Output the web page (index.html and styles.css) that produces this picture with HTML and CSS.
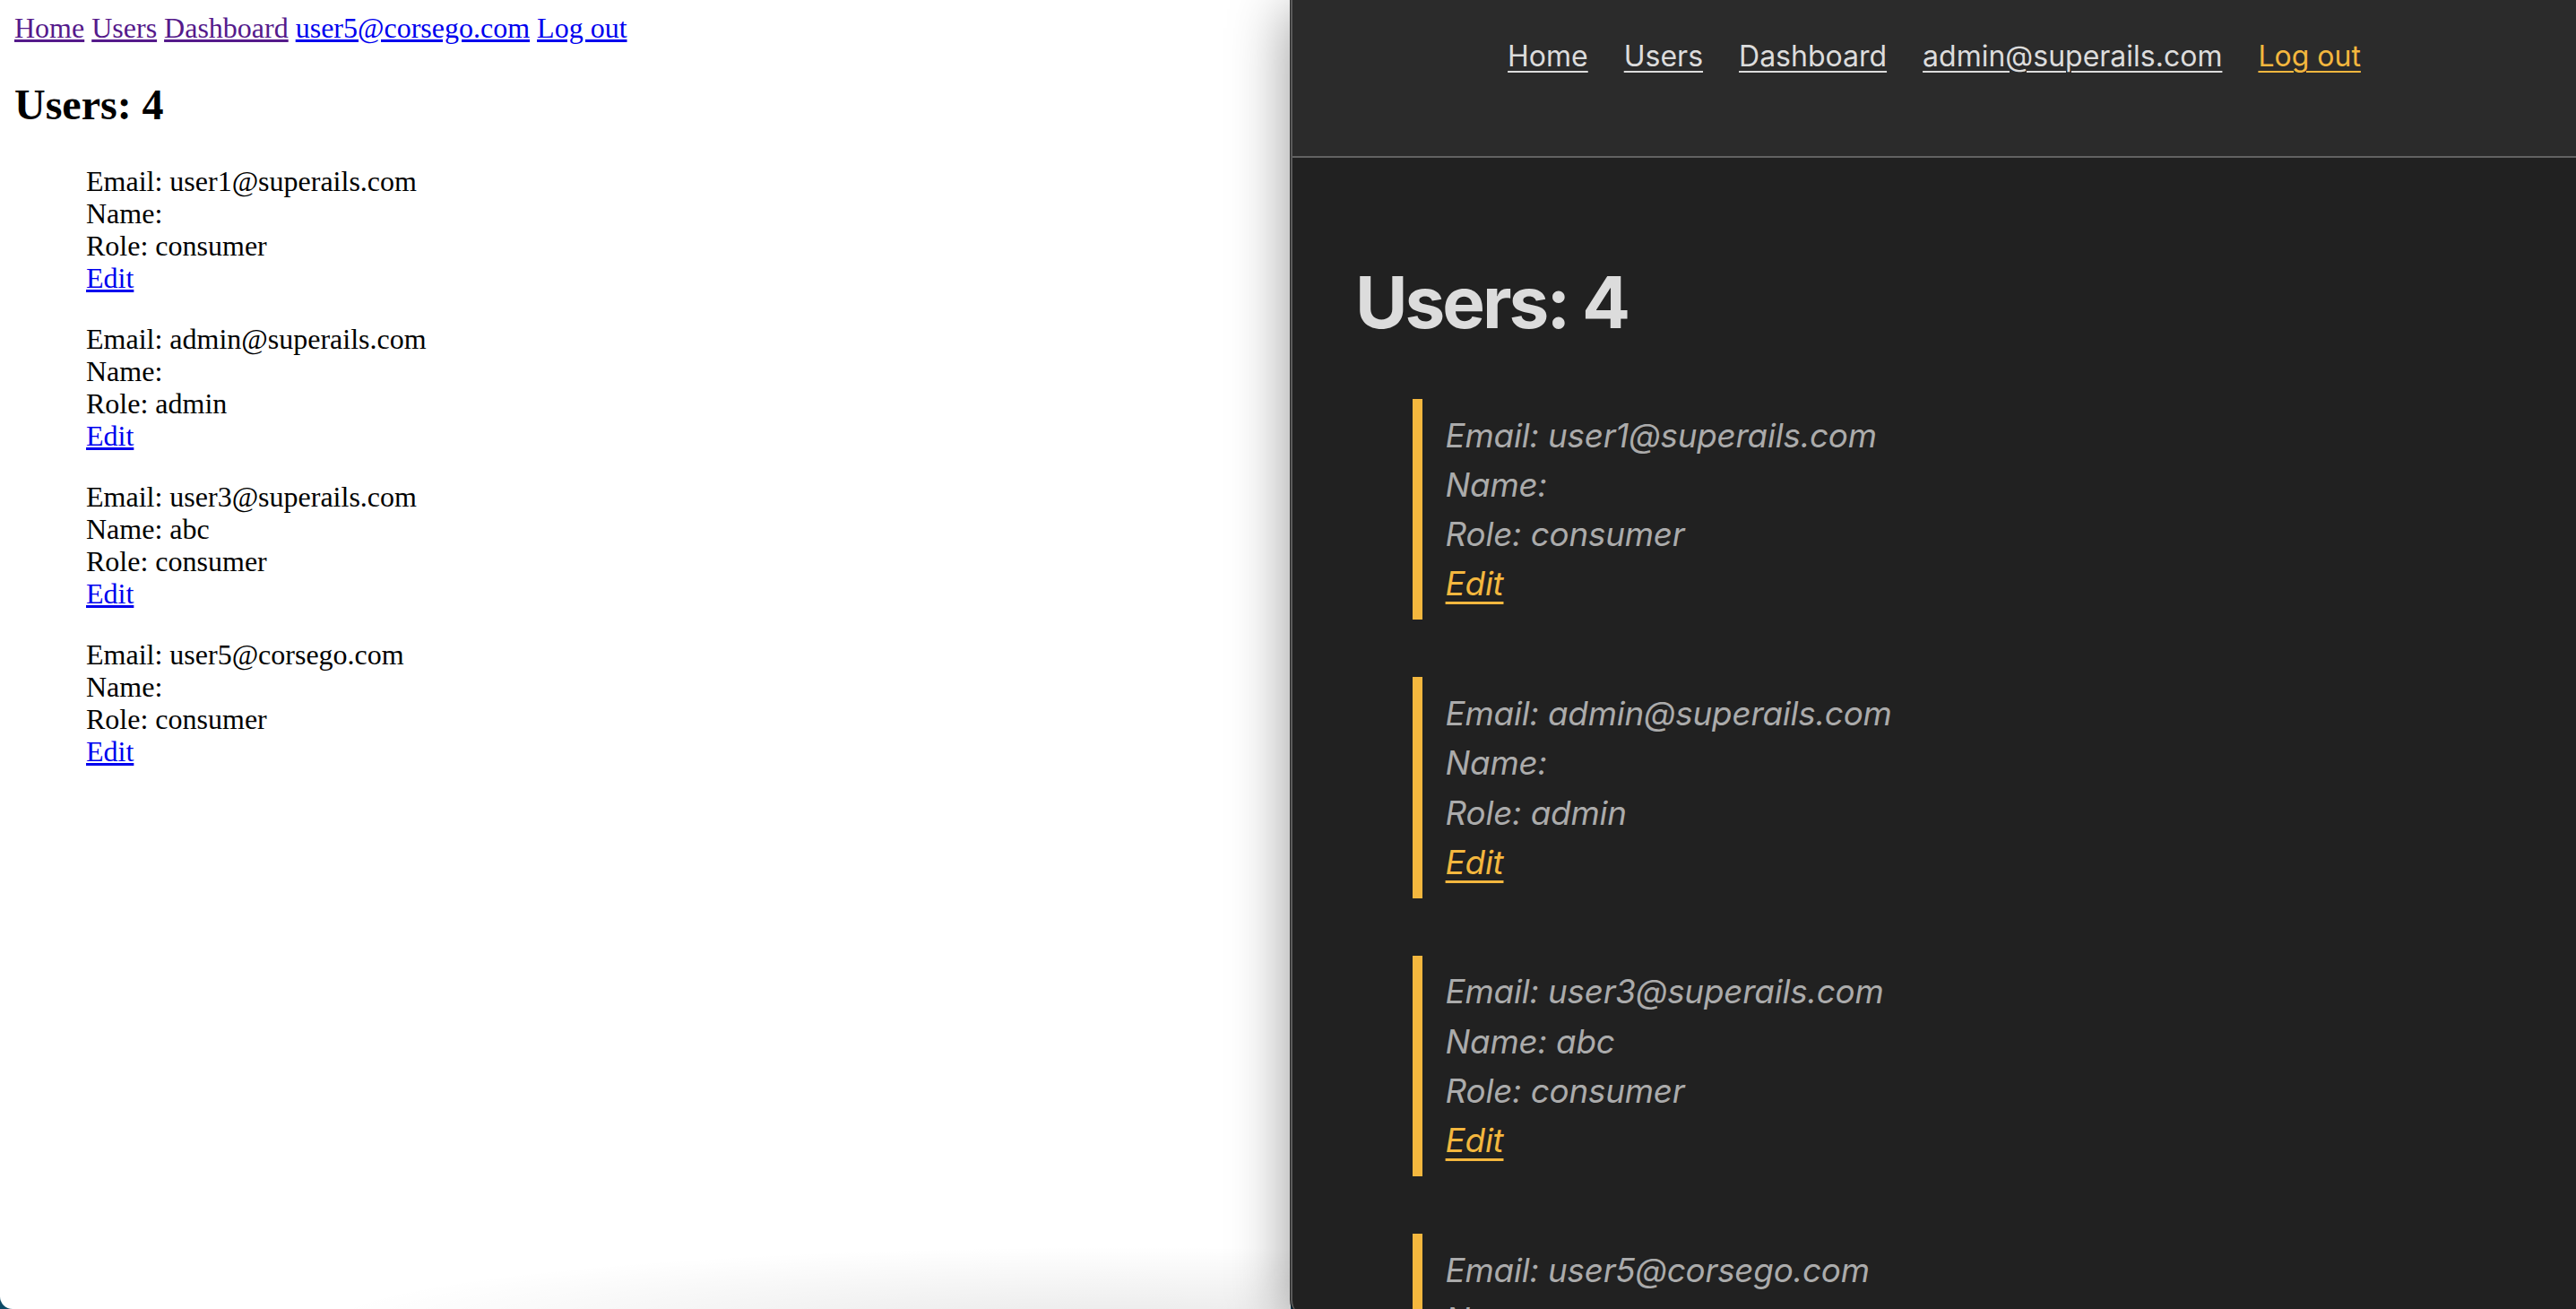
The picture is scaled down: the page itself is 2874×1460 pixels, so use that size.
FILE: index.html
```html
<!DOCTYPE html>
<html lang="en">
<head>
<meta charset="utf-8">
<title>Users</title>
<link rel="stylesheet" href="styles.css">
</head>
<body>
<div class="desktop">
  <div class="win win-light">
    <nav class="l-nav">
      <a class="l-link is-visited" href="#">Home</a>
      <a class="l-link is-visited" href="#">Users</a>
      <a class="l-link is-visited" href="#">Dashboard</a>
      <a class="l-link" href="#">user5@corsego.com</a>
      <a class="l-link" href="#">Log out</a>
    </nav>
    <section class="l-main">
      <h1 class="l-title">Users: 4</h1>
      <blockquote class="l-user">
        <div>Email: user1@superails.com</div>
        <div>Name: </div>
        <div>Role: consumer</div>
        <a class="l-link" href="#">Edit</a>
      </blockquote>
      <blockquote class="l-user">
        <div>Email: admin@superails.com</div>
        <div>Name: </div>
        <div>Role: admin</div>
        <a class="l-link" href="#">Edit</a>
      </blockquote>
      <blockquote class="l-user">
        <div>Email: user3@superails.com</div>
        <div>Name: abc</div>
        <div>Role: consumer</div>
        <a class="l-link" href="#">Edit</a>
      </blockquote>
      <blockquote class="l-user">
        <div>Email: user5@corsego.com</div>
        <div>Name: </div>
        <div>Role: consumer</div>
        <a class="l-link" href="#">Edit</a>
      </blockquote>
    </section>
  </div>

  <div class="win win-dark">
    <header class="d-header">
      <nav class="d-nav">
        <a class="d-link" href="#">Home</a>
        <a class="d-link" href="#">Users</a>
        <a class="d-link" href="#">Dashboard</a>
        <a class="d-link" href="#">admin@superails.com</a>
        <a class="d-link d-accent" href="#">Log out</a>
      </nav>
    </header>
    <main class="d-main">
      <h1 class="d-title">Users: 4</h1>
      <blockquote class="d-user">
        <div>Email: user1@superails.com</div>
        <div>Name: </div>
        <div>Role: consumer</div>
        <a class="d-edit" href="#">Edit</a>
      </blockquote>
      <blockquote class="d-user">
        <div>Email: admin@superails.com</div>
        <div>Name: </div>
        <div>Role: admin</div>
        <a class="d-edit" href="#">Edit</a>
      </blockquote>
      <blockquote class="d-user">
        <div>Email: user3@superails.com</div>
        <div>Name: abc</div>
        <div>Role: consumer</div>
        <a class="d-edit" href="#">Edit</a>
      </blockquote>
      <blockquote class="d-user">
        <div>Email: user5@corsego.com</div>
        <div>Name: </div>
        <div>Role: consumer</div>
        <a class="d-edit" href="#">Edit</a>
      </blockquote>
    </main>
  </div>
</div>
</body>
</html>
```

FILE: styles.css
```css
html, body {
  margin: 0;
  padding: 0;
  height: 100%;
}

body {
  background: #0d4a66;
  overflow: hidden;
}

.desktop {
  display: flex;
  height: 1460px;
  overflow: hidden;
}

/* ---------- light (unstyled) window ---------- */
.win-light {
  flex: 0 0 1440px;
  box-sizing: border-box;
  height: 1460px;
  padding: 13px 16px 16px;
  background:
    radial-gradient(ellipse 900px 90px at 1250px 1480px, rgba(0, 0, 0, 0.09), rgba(0, 0, 0, 0) 100%),
    #ffffff;
  border-bottom-left-radius: 14px;
  font-family: "Liberation Serif", "Times New Roman", serif;
  font-size: 32px;
  line-height: 36px;
  color: #000;
  overflow: hidden;
}

.l-link {
  color: #0000ee;
  text-decoration: underline;
}

.l-link.is-visited {
  color: #551a8b;
}

.l-title {
  font-size: 48px;
  line-height: 55px;
  font-weight: bold;
  margin: 39.84px 0;
}

.l-user {
  margin: 32px 80px;
}

/* ---------- dark (simple.css-like) window ---------- */
.win-dark {
  flex: 0 0 1434px;
  box-sizing: border-box;
  height: 1468px;
  background: #212121;
  border-left: 2px solid #5a5a5a;
  border-bottom-left-radius: 18px;
  box-shadow: 0 0 0 1px rgba(0, 0, 0, 0.8), -4px 10px 64px rgba(0, 0, 0, 0.38);
  overflow: hidden;
  font-family: "Inter", "Noto Sans", "Liberation Sans", sans-serif;
  color: #dcdcdc;
}

.d-header {
  background: #2b2b2b;
  border-bottom: 2px solid #626262;
  padding: 31px 16px 79px;
}

.d-nav {
  display: flex;
  justify-content: center;
  gap: 40px;
  font-size: 32px;
  line-height: 64px;
}

.d-link {
  color: #dcdcdc;
  text-decoration: underline;
  text-decoration-thickness: 2px;
  text-underline-offset: 5px;
}

.d-accent {
  color: #f4b73e;
}

.d-main {
  padding: 117px 70px 0 70px;
}

.d-title {
  margin: 0 0 64px;
  font-size: 80px;
  font-weight: 700;
  line-height: 88px;
  letter-spacing: -3px;
  color: #dcdcdc;
}

.d-user {
  margin: 64px 0 64px 64px;
  padding: 12.8px 25.6px;
  border-left: 11px solid #f4b73e;
  font-style: italic;
  font-size: 36.8px;
  line-height: 1.5;
  letter-spacing: -0.2px;
  color: #ababab;
}

.d-edit {
  color: #f4b73e;
  text-decoration: underline;
  text-decoration-thickness: 2.5px;
  text-underline-offset: 7px;
}
```
